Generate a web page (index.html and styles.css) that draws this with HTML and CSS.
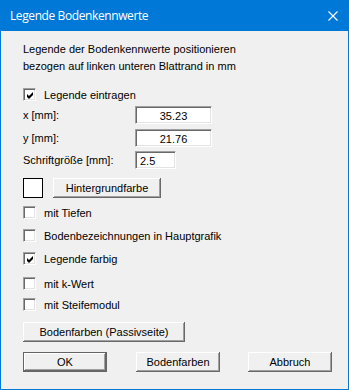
FILE: index.html
```html
<!DOCTYPE html>
<html lang="de">
<head>
<meta charset="utf-8">
<title>Legende Bodenkennwerte</title>
<link rel="stylesheet" href="styles.css">
</head>
<body>
<div class="window">
  <div class="titlebar">
    <span class="title">Legende Bodenkennwerte</span>
    <svg class="close" width="10" height="10" viewBox="0 0 10 10"><path d="M0.5 0.5 L9.5 9.5 M9.5 0.5 L0.5 9.5" stroke="#fff" stroke-width="1.1" fill="none"/></svg>
  </div>
  <div class="content">
    <p class="desc">Legende der Bodenkennwerte positionieren<br>bezogen auf linken unteren Blattrand in mm</p>

    <div class="check first">
      <span class="box"><svg width="9" height="9" viewBox="0 0 9 9"><path d="M1 3 L3 5 L7 1 L7 4 L3 8 L1 6 Z" fill="#000"/></svg></span>
      <span>Legende eintragen</span>
    </div>

    <div class="field f1"><span class="lbl">x [mm]:</span><span class="input wide">35.23</span></div>
    <div class="field f2"><span class="lbl">y [mm]:</span><span class="input wide">21.76</span></div>
    <div class="field f3"><span class="lbl">Schriftgröße [mm]:</span><span class="input narrow">2.5</span></div>

    <div class="color-row">
      <span class="swatch"></span>
      <span class="btn bg">Hintergrundfarbe</span>
    </div>

    <div class="check c1"><span class="box"></span><span>mit Tiefen</span></div>
    <div class="check c2"><span class="box"></span><span>Bodenbezeichnungen in Hauptgrafik</span></div>
    <div class="check c3"><span class="box"><svg width="9" height="9" viewBox="0 0 9 9"><path d="M1 3 L3 5 L7 1 L7 4 L3 8 L1 6 Z" fill="#000"/></svg></span><span>Legende farbig</span></div>
    <div class="check c4"><span class="box"></span><span>mit k-Wert</span></div>
    <div class="check c5"><span class="box"></span><span>mit Steifemodul</span></div>

    <span class="btn passiv">Bodenfarben (Passivseite)</span>

    <div class="actions">
      <span class="btn action default">OK</span>
      <span class="btn action mid">Bodenfarben</span>
      <span class="btn action last">Abbruch</span>
    </div>
  </div>
</div>
</body>
</html>
```
FILE: styles.css
```css
* { box-sizing: border-box; }
html, body { margin: 0; padding: 0; }
body {
  width: 349px;
  height: 390px;
  background: #f0f0f0;
  font-family: "Liberation Sans", Arial, sans-serif;
  font-size: 11px;
  color: #000;
  overflow: hidden;
}
.window {
  width: 349px;
  height: 390px;
  border: 1px solid #0078d7;
  border-top: 0;
  display: flex;
  flex-direction: column;
  background: #f0f0f0;
}
.titlebar {
  height: 31px;
  flex: none;
  background: #0078d7;
  color: #fff;
  display: flex;
  align-items: center;
  justify-content: space-between;
  padding: 0 10px 0 9px;
  font-family: "Open Sans", "Noto Sans", sans-serif;
  font-size: 12px;
}
.title { line-height: 16px; padding-top: 1px; letter-spacing: -0.4px; }
.close { display: block; }
.content {
  padding: 10px 0 0 21px;
  display: flex;
  flex-direction: column;
  align-items: flex-start;
}
.desc {
  margin: 0 0 0 1px;
  line-height: 17px;
}
.check {
  height: 17px;
  display: flex;
  align-items: center;
  gap: 8px;
  margin-left: 1px;
}
.check.first { margin-top: 11px; }
.check.c1 { margin-top: 6px; }
.check.c2 { margin-top: 6px; }
.check.c3 { margin-top: 6px; }
.check.c4 { margin-top: 8px; }
.check.c5 { margin-top: 4px; }
.box {
  width: 13px;
  height: 13px;
  background: #fff;
  border: 1px solid;
  border-color: #a0a0a0 #fff #fff #a0a0a0;
  box-shadow: inset 1px 1px #696969, inset -1px -1px #e3e3e3;
  display: flex;
  align-items: center;
  justify-content: center;
}
.box svg { display: block; margin: 1px 0 0 1px; }
.field {
  height: 18px;
  display: flex;
  align-items: center;
  margin-left: 1px;
}
.field.f1 { margin-top: 3px; }
.field.f2 { margin-top: 5px; }
.field.f3 { margin-top: 4px; }
.lbl { width: 112px; }
.input {
  height: 18px;
  background: #fff;
  border: 1px solid;
  border-color: #a0a0a0 #fff #fff #a0a0a0;
  box-shadow: inset 1px 1px #696969, inset -1px -1px #e3e3e3;
  line-height: 18px;
}
.input.wide { width: 77px; text-align: center; }
.input.narrow { width: 41px; padding-left: 4px; }
.color-row {
  margin-top: 9px;
  margin-left: 1px;
  display: flex;
  gap: 10px;
  height: 20px;
}
.swatch {
  width: 20px;
  height: 20px;
  background: #fff;
  border: 1px solid #000;
}
.btn {
  display: flex;
  align-items: center;
  justify-content: center;
  height: 20px;
  background: #f0f0f0;
  box-shadow: inset -1px -1px #696969, inset 1px 1px #fff, inset -2px -2px #a0a0a0, inset 2px 2px #f0f0f0;
  padding-bottom: 1px;
}
.btn.bg { width: 108px; }
.btn.passiv { width: 162px; margin-top: 9px; margin-left: 1px; }
.actions {
  display: flex;
  margin-top: 10px;
  margin-left: 1px;
}
.btn.action { width: 84px; }
.btn.mid { margin-left: 29px; }
.btn.last { margin-left: 28px; }
.btn.default {
  border: 1px solid #646464;
  box-shadow: inset -1px -1px #696969, inset 1px 1px #fff, inset -2px -2px #a0a0a0;
}
```
